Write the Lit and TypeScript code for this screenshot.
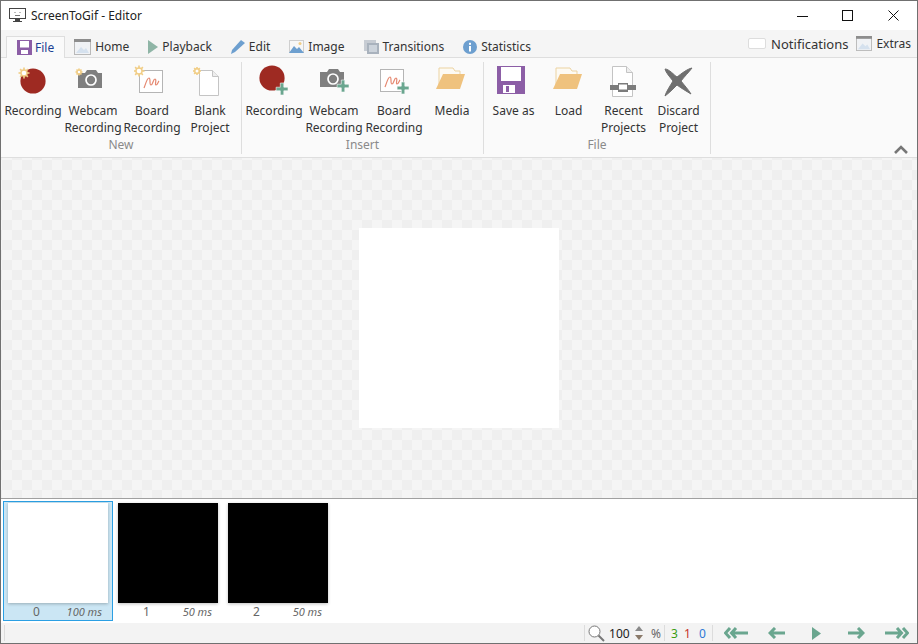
import {LitElement, css, html, svg} from 'lit';
import {customElement} from 'lit/decorators.js';

const RED = '#9e2a22';
const SUN = '#f1cd85';
const GREY = '#7f7f7f';
const TEAL = '#6aa68f';
const FOLDER = '#efc27e';

// small starburst that marks the "new" buttons
const sun = (cx: number, cy: number, r: number) => {
	const rays = [0, 45, 90, 135, 180, 225, 270, 315].map((a) => {
		const t = (a * Math.PI) / 180;
		return svg`<line x1=${cx} y1=${cy} x2=${cx + Math.cos(t) * r} y2=${cy + Math.sin(t) * r} stroke=${SUN} stroke-width="1.6" />`;
	});
	return svg`${rays}<circle cx=${cx} cy=${cy} r=${r * 0.55} fill="#fff" stroke=${SUN} stroke-width="1.4" />`;
};

const plus = (x: number, y: number) =>
	svg`<path d="M${x - 1.5} ${y - 6}h3.5v4.2h4.2v3.6h-4.2v4.2h-3.5v-4.2h-4.2v-3.6h4.2z" transform="translate(-.2 0)" fill=${TEAL} stroke="#fafafa" stroke-width=".6" />`;

const camera = svg`<path d="M3 8h7l2-3h9l2 3h4v15H3z" fill=${GREY} /><circle cx="16" cy="15" r="5" fill=${GREY} stroke="#fff" stroke-width="1.7" />`;
const board = svg`<rect x="3.5" y="5.5" width="23" height="22" fill="#fff" stroke="#b5b5b5" /><path d="M8 23c2-5 3-10 5-10s0 7 2 7 2-6 4-6-.5 6 1 6 2-3 3-4" fill="none" stroke="#e58870" stroke-width="1.2" />`;
const folder = svg`<path d="M5 21V4h14l2 3h5v5" fill="#fdfaf3" stroke="#ecd3a2" /><path d="M9 10h22l-5 15H2z" transform="translate(0 0)" fill=${FOLDER} />`;

const icons: Record<string, unknown> = {
	recNew: svg`<circle cx="18" cy="17" r="12.6" fill=${RED} />${sun(9, 9, 5.5)}`,
	camNew: svg`<g transform="translate(0 1)">${camera}</g>${sun(4, 8, 3.5)}`,
	boardNew: svg`<g transform="translate(2 1)">${board}</g>${sun(5, 7, 5.5)}`,
	blank: svg`<path d="M7.5 6.5h13l6 6v19h-19z" fill="#fff" stroke="#c4c4c4" /><path d="M20.5 6.5v6h6" fill="#eee" stroke="#c4c4c4" />${sun(5, 7, 4)}`,
	recAdd: svg`<circle cx="16" cy="14" r="12.6" fill=${RED} />${plus(26, 25)}`,
	camAdd: svg`<g transform="translate(1 0)">${camera}</g>${plus(27, 22)}`,
	boardAdd: svg`<g transform="translate(1 0)">${board}</g>${plus(27, 24)}`,
	media: folder,
	save: svg`<path d="M1 2h28v28H1z" fill="#8c5ea6" /><rect x="5" y="3" width="20" height="14" fill="#fff" /><rect x="7" y="21" width="12" height="8" fill="#fff" /><rect x="10" y="22" width="3" height="6" fill="#8c5ea6" />`,
	recent: svg`<path d="M6.5 2.5h14l6 6v24h-20z" fill="#fff" stroke="#c4c4c4" /><path d="M20.5 2.5v6h6" fill="#eee" stroke="#c4c4c4" /><path d="M4 21h8v-2h10v2h8v5h-8v2H12v-2H4z" fill="#7c7c7c" /><rect x="12.5" y="20" width="9" height="6" fill="#fff" stroke="#7c7c7c" />`,
	discard: svg`<path d="M4 5C8 5 13 11 16 13 20 10 26 5 31 4 28 8 23 13 20 17 23 21 27 25 30 30 25 27 20 24 16 21 12 25 8 29 4 32 5 28 9 22 12 17 9 13 5 9 4 5z" fill="#6f6f6f" stroke="#6f6f6f" stroke-linejoin="round" />`,
};

const tabIcons: Record<string, unknown> = {
	home: svg`<svg width="17" height="16" viewBox="0 0 17 16"><rect x=".5" y=".5" width="16" height="15" fill="#f0f2f5" stroke="#b9b9b9" /><rect y="0" width="17" height="3" fill="#8d8d8d" /><path d="M2 14l5-6 3 3 2-2 3 5z" fill="#d5e1ee" /></svg>`,
	play: svg`<svg width="10" height="14" viewBox="0 0 10 14"><path d="M0 0l10 7-10 7z" fill="#8fb5a6" /></svg>`,
	edit: svg`<svg width="14" height="14" viewBox="0 0 14 14"><path d="M0 14l1-4 9-10 4 3-10 9z" fill="#6d9fcf" /></svg>`,
	image: svg`<svg width="15" height="13" viewBox="0 0 15 13"><rect x=".5" y=".5" width="14" height="12" fill="#f7f7f7" stroke="#cfcfcf" /><path d="M0 13l5-7 3 3 2-2 5 6z" fill="#6d9fcf" /><circle cx="11" cy="3.5" r="1.5" fill=${SUN} /></svg>`,
	transitions: svg`<svg width="15" height="14" viewBox="0 0 15 14"><rect x="0" y="0" width="12" height="11" fill="#c7ccd3" /><rect x="3" y="3" width="12" height="11" fill="#a9b2bd" /><rect x="5" y="5" width="8" height="7" fill="#ccd3db" /></svg>`,
	info: svg`<svg width="14" height="14" viewBox="0 0 14 14"><circle cx="7" cy="7" r="7" fill="#6d9fcf" /><rect x="6" y="6" width="2" height="5.5" fill="#fff" /><rect x="6" y="2.8" width="2" height="2" fill="#fff" /></svg>`,
	file: svg`<svg width="15" height="15" viewBox="0 0 15 15"><path d="M0 0h15v15H0z" fill="#8c5ea6" /><rect x="3" y="1" width="9" height="6.5" fill="#fff" /><rect x="4" y="10" width="7" height="4" fill="#fff" /></svg>`,
};

interface RibbonButton {
	label: string[];
	icon: string;
	width: number;
}

const groups: {name: string; width: number; buttons: RibbonButton[]}[] = [
	{
		name: 'New',
		width: 241,
		buttons: [
			{label: ['Recording'], icon: 'recNew', width: 60},
			{label: ['Webcam', 'Recording'], icon: 'camNew', width: 60},
			{label: ['Board', 'Recording'], icon: 'boardNew', width: 58},
			{label: ['Blank', 'Project'], icon: 'blank', width: 58},
		],
	},
	{
		name: 'Insert',
		width: 242,
		buttons: [
			{label: ['Recording'], icon: 'recAdd', width: 60},
			{label: ['Webcam', 'Recording'], icon: 'camAdd', width: 60},
			{label: ['Board', 'Recording'], icon: 'boardAdd', width: 60},
			{label: ['Media'], icon: 'media', width: 56},
		],
	},
	{
		name: 'File',
		width: 227,
		buttons: [
			{label: ['Save as'], icon: 'save', width: 55},
			{label: ['Load'], icon: 'media', width: 55},
			{label: ['Recent', 'Projects'], icon: 'recent', width: 55},
			{label: ['Discard', 'Project'], icon: 'discard', width: 55},
		],
	},
];

const tabs = [
	{label: 'Home', icon: 'home'},
	{label: 'Playback', icon: 'play'},
	{label: 'Edit', icon: 'edit'},
	{label: 'Image', icon: 'image'},
	{label: 'Transitions', icon: 'transitions'},
	{label: 'Statistics', icon: 'info'},
];

const frames = [
	{index: 0, delay: '100 ms', white: true, selected: true},
	{index: 1, delay: '50 ms', white: false, selected: false},
	{index: 2, delay: '50 ms', white: false, selected: false},
];

@customElement('app-root')
export class AppRoot extends LitElement {
	static styles = css`
		:host {
			display: flex;
			flex-direction: column;
			box-sizing: border-box;
			width: 918px;
			height: 644px;
			border: 1px solid #707070;
			background: #fff;
			font-family: 'Noto Sans', 'Liberation Sans', sans-serif;
			font-size: 12px;
			color: #333;
			overflow: hidden;
		}

		.title {
			display: flex;
			align-items: center;
			height: 29px;
			padding-left: 8px;
			flex: none;
		}
		.title span {
			margin-left: 5px;
			color: #222;
		}
		.controls {
			margin-left: auto;
			display: flex;
		}
		.controls svg {
			display: block;
		}

		.tabs {
			display: flex;
			align-items: flex-end;
			height: 27px;
			flex: none;
			background: #f5f5f5;
			border-bottom: 1px solid #dedede;
			box-sizing: content-box;
			padding-left: 5px;
		}
		.tab {
			display: flex;
			align-items: center;
			gap: 4px;
			height: 21px;
			margin-right: 19px;
		}
		.tab.active {
			background: #fafafa;
			border: 1px solid #dedede;
			border-bottom: none;
			padding: 0 10px;
			height: 21px;
			margin-right: 9px;
			margin-bottom: -1px;
			color: #1c3f94;
			gap: 3px;
		}
		.tabs-right {
			margin-left: auto;
			display: flex;
			align-items: center;
			height: 27px;
			padding-right: 6px;
			font-size: 13px;
		}
		.note {
			width: 16px;
			height: 9px;
			background: #fff;
			border: 1px solid #ddd;
			border-radius: 2px;
			margin-right: 5px;
		}

		.ribbon {
			display: flex;
			position: relative;
			height: 99px;
			flex: none;
			background: #fafafa;
			border-bottom: 1px solid #dedede;
		}
		.group {
			box-sizing: border-box;
			display: flex;
			flex-direction: column;
			align-items: center;
			height: 92px;
			margin-top: 4px;
			border-right: 1px solid #dedede;
		}
		.group-buttons {
			display: flex;
			width: 100%;
			padding-left: 2px;
			box-sizing: border-box;
		}
		.group-name {
			margin-top: auto;
			color: #8a8a8a;
			line-height: 16px;
			padding-bottom: 1px;
		}
		.btn {
			display: flex;
			flex-direction: column;
			align-items: center;
			flex: none;
		}
		.btn svg {
			display: block;
			height: 36px;
			margin-top: 2px;
			margin-bottom: 2px;
		}
		.btn div {
			line-height: 17px;
			white-space: nowrap;
			color: #333;
		}
		.collapse {
			position: absolute;
			right: 8px;
			bottom: 3px;
		}

		.canvas {
			flex: 1;
			display: flex;
			align-items: center;
			justify-content: center;
			background-color: #f5f5f5;
			background-image: conic-gradient(#efefef 25%, transparent 0 50%, #efefef 0 75%, transparent 0);
			background-size: 20px 20px;
			background-position: 1px -8px;
			border-bottom: 1px solid #a0a0a0;
		}
		.canvas div {
			width: 200px;
			height: 200px;
			background: #fff;
		}

		.frames {
			display: flex;
			height: 124px;
			flex: none;
			padding: 2px 0 0 2px;
			box-sizing: border-box;
		}
		.frame {
			box-sizing: border-box;
			width: 110px;
			height: 120px;
			border: 1px solid transparent;
			padding: 1px 4px 0;
		}
		.frame.selected {
			background: #cbe6f4;
			border-color: #2b9fe3;
		}
		.thumb {
			width: 100px;
			height: 100px;
			background: #000;
			box-shadow: 0 1px 3px rgba(0, 0, 0, 0.25);
		}
		.thumb.white {
			background: #fff;
		}
		.meta {
			display: flex;
			justify-content: space-between;
			padding: 0 6px 0 25px;
			line-height: 17px;
			color: #666;
		}
		.meta i {
			font-size: 11px;
		}

		.status {
			display: flex;
			align-items: center;
			height: 20px;
			flex: none;
			background: #f3f3f3;
			padding-left: 3px;
		}
		.sep {
			width: 1px;
			height: 16px;
			background: #dcdcdc;
		}
		.status-right {
			margin-left: auto;
			display: flex;
			align-items: center;
			padding-right: 8px;
		}
		.zoom {
			margin-left: 3px;
			margin-right: 4px;
		}
		.value {
			width: 24px;
			color: #222;
		}
		.pct {
			color: #666;
			margin: 0 3px 0 8px;
		}
		.spin {
			display: block;
			margin-left: 2px;
		}
		.n {
			width: 13px;
			text-align: center;
		}
		.nav {
			display: flex;
			align-items: center;
			margin-left: 11px;
			gap: 20px;
		}
		.nav svg {
			display: block;
		}
	`;

	private renderButton(b: RibbonButton) {
		return html`
			<div class="btn" style="width:${b.width}px">
				<svg width="36" height="36" viewBox="0 0 36 36">${icons[b.icon]}</svg>
				${b.label.map((l) => html`<div>${l}</div>`)}
			</div>
		`;
	}

	render() {
		return html`
			<div class="title">
				<svg width="17" height="15" viewBox="0 0 17 15">
					<rect x=".5" y=".5" width="16" height="10" fill="#fff" stroke="#444" />
					<path d="M6 11h5v2h2v1H4v-1h2z" fill="#444" />
					<path d="M6 4v1M11 4v1M6 7.5h5" stroke="#777" />
				</svg>
				<span>ScreenToGif - Editor</span>
				<div class="controls">
					<svg width="136" height="29" viewBox="0 0 136 29" fill="none" stroke="#111">
						<path d="M16 15.5h11" />
						<rect x="61.5" y="9.5" width="10" height="10" />
						<path d="M107.5 9.5l10 10M117.5 9.5l-10 10" />
						<rect x="0" y="0" width="0" height="0" />
					</svg>
				</div>
			</div>
			<div class="tabs">
				<div class="tab active">${tabIcons.file}<span>File</span></div>
				${tabs.map((t) => html`<div class="tab">${tabIcons[t.icon]}<span>${t.label}</span></div>`)}
				<div class="tabs-right">
					<div class="note"></div>
					<span>Notifications</span>
					<svg style="margin:0 4px 0 8px" width="16" height="15" viewBox="0 0 17 16">
						<rect x=".5" y=".5" width="16" height="15" fill="#f0f2f5" stroke="#b9b9b9" />
						<rect width="17" height="3" fill="#8d8d8d" />
						<path d="M2 14l5-6 3 3 2-2 3 5z" fill="#d5e1ee" />
					</svg>
					<span style="font-size:12px">Extras</span>
				</div>
			</div>
			<div class="ribbon">
				${groups.map(
					(g) => html`
						<div class="group" style="width:${g.width}px">
							<div class="group-buttons">${g.buttons.map((b) => this.renderButton(b))}</div>
							<div class="group-name">${g.name}</div>
						</div>
					`
				)}
				<svg class="collapse" width="16" height="10" viewBox="0 0 16 10" fill="none" stroke="#777" stroke-width="2.6">
					<path d="M2 9l6-6 6 6" />
				</svg>
			</div>
			<div class="canvas"><div></div></div>
			<div class="frames">
				${frames.map(
					(f) => html`
						<div class="frame ${f.selected ? 'selected' : ''}">
							<div class="thumb ${f.white ? 'white' : ''}"></div>
							<div class="meta"><span>${f.index}</span><i>${f.delay}</i></div>
						</div>
					`
				)}
			</div>
			<div class="status">
				<div class="sep"></div>
				<div class="status-right">
					<div class="sep"></div>
					<svg class="zoom" width="17" height="17" viewBox="0 0 17 17" fill="none" stroke="#777">
						<circle cx="6.5" cy="6.5" r="5.5" fill="#fff" />
						<path d="M10.5 10.5l5.5 5.5" stroke-width="2" />
					</svg>
					<span class="value">100</span>
					<svg class="spin" width="8" height="14" viewBox="0 0 8 14">
						<path d="M4 0l4 5H0z" fill="#8a8a8a" />
						<path d="M4 14l4-5H0z" fill="#8a7a6a" />
					</svg>
					<span class="pct">%</span>
					<div class="sep"></div>
					<span class="n" style="margin-left:3px;color:#3a9c12">3</span>
					<span class="n" style="color:#c8332a">1</span>
					<span class="n" style="margin-left:2px;color:#2f78d6">0</span>
					<div class="sep" style="margin-left:3px"></div>
					<div class="nav">
						<svg width="24" height="12" viewBox="0 0 24 12" fill="none" stroke=${TEAL} stroke-width="3">
							<path d="M6 1L1.5 6 6 11M12 1L7.5 6 12 11M8 6h16" />
						</svg>
						<svg width="17" height="12" viewBox="0 0 17 12" fill="none" stroke=${TEAL} stroke-width="3">
							<path d="M7 1L2 6l5 5M2 6h15" />
						</svg>
						<svg width="9" height="13" viewBox="0 0 9 13" style="margin:0 7px"><path d="M0 0l9 6.5L0 13z" fill=${TEAL} /></svg>
						<svg width="17" height="12" viewBox="0 0 17 12" fill="none" stroke=${TEAL} stroke-width="3">
							<path d="M10 1l5 5-5 5M15 6H0" />
						</svg>
						<svg width="24" height="12" viewBox="0 0 24 12" fill="none" stroke=${TEAL} stroke-width="3">
							<path d="M18 1l4.500 5L18 11M12 1l4.500 5L12 11M16 6H0" />
						</svg>
					</div>
				</div>
			</div>
		`;
	}
}
